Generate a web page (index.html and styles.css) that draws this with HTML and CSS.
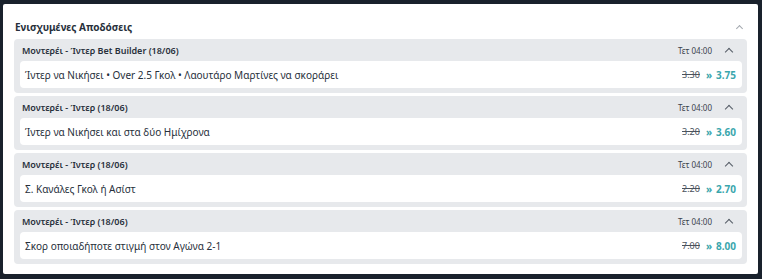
FILE: index.html
```html
<!DOCTYPE html>
<html>
<head>
    <title>Ενισχυμένες Αποδόσεις</title>
    <meta name="viewport" content="width=device-width, initial-scale=1.0">
    <link rel="stylesheet" href="styles.css">
</head>
<body>
    <div class="panel">
        <div class="panel-head">
            <h2>Ενισχυμένες Αποδόσεις</h2>
            <span class="chev chev-light"></span>
        </div>

        <div class="group">
            <div class="group-head">
                <span class="match">Μοντερέι - Ίντερ Bet Builder (18/06)</span>
                <span class="time">Τετ 04:00</span>
                <span class="chev"></span>
            </div>
            <div class="row">
                <span class="sel">Ίντερ να Νικήσει • Over 2.5 Γκολ • Λαουτάρο Μαρτίνες να σκοράρει</span>
                <span class="old">3.30</span>
                <span class="arrow">»</span>
                <span class="odd">3.75</span>
            </div>
        </div>

        <div class="group">
            <div class="group-head">
                <span class="match">Μοντερέι - Ίντερ (18/06)</span>
                <span class="time">Τετ 04:00</span>
                <span class="chev"></span>
            </div>
            <div class="row">
                <span class="sel">Ίντερ να Νικήσει και στα δύο Ημίχρονα</span>
                <span class="old">3.20</span>
                <span class="arrow">»</span>
                <span class="odd">3.60</span>
            </div>
        </div>

        <div class="group">
            <div class="group-head">
                <span class="match">Μοντερέι - Ίντερ (18/06)</span>
                <span class="time">Τετ 04:00</span>
                <span class="chev"></span>
            </div>
            <div class="row">
                <span class="sel">Σ. Κανάλες Γκολ ή Ασίστ</span>
                <span class="old">2.20</span>
                <span class="arrow">»</span>
                <span class="odd">2.70</span>
            </div>
        </div>

        <div class="group">
            <div class="group-head">
                <span class="match">Μοντερέι - Ίντερ (18/06)</span>
                <span class="time">Τετ 04:00</span>
                <span class="chev"></span>
            </div>
            <div class="row">
                <span class="sel">Σκορ οποιαδήποτε στιγμή στον Αγώνα 2-1</span>
                <span class="old">7.00</span>
                <span class="arrow">»</span>
                <span class="odd">8.00</span>
            </div>
        </div>
    </div>
</body>
</html>
```

FILE: styles.css
```css
:root {
    --bg-color: #19212c;
    --panel-color: #ffffff;
    --group-color: #e7e9ec;
    --text-color: #27303b;
    --teal: #3aa6ad;
}
body {
    font-family: 'Noto Sans', 'Open Sans', sans-serif;
    background-color: var(--bg-color);
    color: var(--text-color);
    margin: 0;
    padding: 4px 4px 5px 3px;
}
.panel {
    background-color: var(--panel-color);
    border-radius: 2px;
    padding: 10px 11px 10px 11px;
    height: 250px;
}
.panel-head {
    display: flex;
    align-items: center;
    justify-content: space-between;
    height: 25px;
}
.panel-head h2 {
    margin: 0 0 0 1px;
    font-size: 10px;
    font-weight: 700;
}
.chev {
    width: 5px;
    height: 5px;
    border-left: 1.5px solid #555c66;
    border-top: 1.5px solid #555c66;
    transform: rotate(45deg);
    margin: 3px 10px 0 14px;
}
.chev-light {
    border-color: #a3a8af;
    margin-right: 5px;
    width: 4px;
    height: 4px;
}
.group {
    background-color: var(--group-color);
    border-radius: 4px;
    padding: 0 5px 5px 6px;
    margin-bottom: 3px;
}
.group-head {
    display: flex;
    align-items: center;
    height: 22px;
    padding-left: 2px;
}
.match {
    flex: 1;
    font-size: 9px;
    font-weight: 600;
}
.time {
    font-size: 8px;
    color: #3a424c;
}
.row {
    display: flex;
    align-items: center;
    background-color: #ffffff;
    border-radius: 4px;
    height: 27px;
    padding: 0 6px 0 5px;
    font-size: 10px;
}
.sel {
    flex: 1;
}
.old {
    font-size: 9px;
    text-decoration: line-through;
    color: #4a525c;
}
.arrow {
    color: var(--teal);
    font-weight: 700;
    margin: 0 4px 0 6px;
    font-size: 10px;
}
.odd {
    color: var(--teal);
    font-weight: 700;
    font-size: 10px;
}
```
